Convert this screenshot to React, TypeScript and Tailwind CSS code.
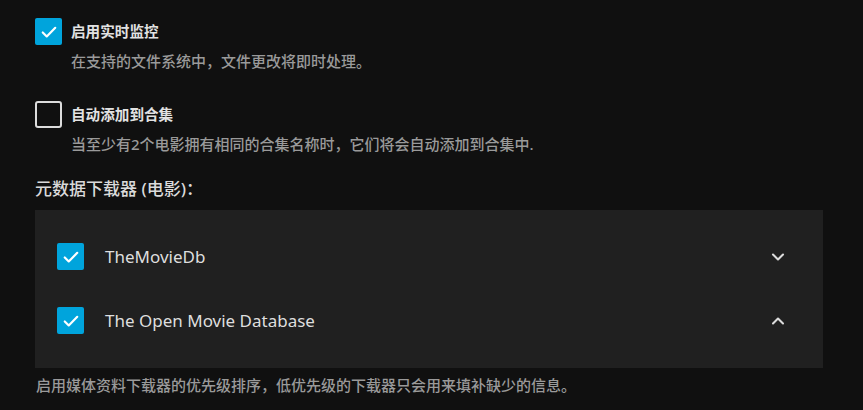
import { ChevronDown, ChevronUp } from "lucide-react";

const font = { fontFamily: '"Noto Sans", "Noto Sans CJK SC", sans-serif' };

function Box({ checked }: { checked: boolean }) {
  if (!checked) {
    return (
      <div className="size-[27px] shrink-0 rounded-[3px] border-2 border-[#dcdcdc]" />
    );
  }
  return (
    <div className="flex size-[27px] shrink-0 items-center justify-center rounded-[2px] bg-[#00a4dc]">
      <svg viewBox="0 0 24 24" className="size-[20px]" fill="none">
        <path
          d="M4.5 12.5l4.8 4.8L19.5 7"
          stroke="white"
          strokeWidth="2.6"
          strokeLinecap="round"
          strokeLinejoin="round"
        />
      </svg>
    </div>
  );
}

function CheckField({
  checked,
  label,
  desc,
}: {
  checked: boolean;
  label: string;
  desc: string;
}) {
  return (
    <div>
      <div className="flex items-center gap-[9px]">
        <Box checked={checked} />
        <span className="text-[14.6px] font-semibold leading-none text-[#e2e2e2]">
          {label}
        </span>
      </div>
      <p className="ml-[36px] mt-[6px] text-[15px] font-medium leading-[20px] text-[#9a9a9a]">
        {desc}
      </p>
    </div>
  );
}

const fetchers = [
  { name: "TheMovieDb", open: false },
  { name: "The Open Movie Database", open: true },
];

export default function App() {
  return (
    <div
      className="h-[410px] w-full overflow-hidden bg-[#101010] pl-[35px] pr-[40px] pt-[18px]"
      style={font}
    >
      <CheckField
        checked
        label="启用实时监控"
        desc="在支持的文件系统中，文件更改将即时处理。"
      />
      <div className="mt-[30px]">
        <CheckField
          checked={false}
          label="自动添加到合集"
          desc="当至少有2个电影拥有相同的合集名称时，它们将会自动添加到合集中."
        />
      </div>

      <h3 className="mt-[23px] text-[17px] font-medium leading-[24px] text-[#dadada]">
        元数据下载器 (电影)：
      </h3>

      <div className="mt-[9px] h-[158px] bg-[#202020] px-[22px] pt-[33px]">
        {fetchers.map((f, i) => (
          <div
            key={f.name}
            className={`flex h-[27px] items-center ${i > 0 ? "mt-[37px]" : ""}`}
          >
            <Box checked />
            <span className="ml-[21px] flex-1 text-[17px] leading-none text-[#dedede]">
              {f.name}
            </span>
            {f.open ? (
              <ChevronUp className="mr-[13px] size-[20px] text-[#dcdcdc]" strokeWidth={2.5} />
            ) : (
              <ChevronDown className="mr-[13px] size-[20px] text-[#dcdcdc]" strokeWidth={2.5} />
            )}
          </div>
        ))}
      </div>

      <p className="ml-px mt-[7px] text-[15px] font-medium leading-[20px] text-[#9a9a9a]">
        启用媒体资料下载器的优先级排序，低优先级的下载器只会用来填补缺少的信息。
      </p>
    </div>
  );
}
